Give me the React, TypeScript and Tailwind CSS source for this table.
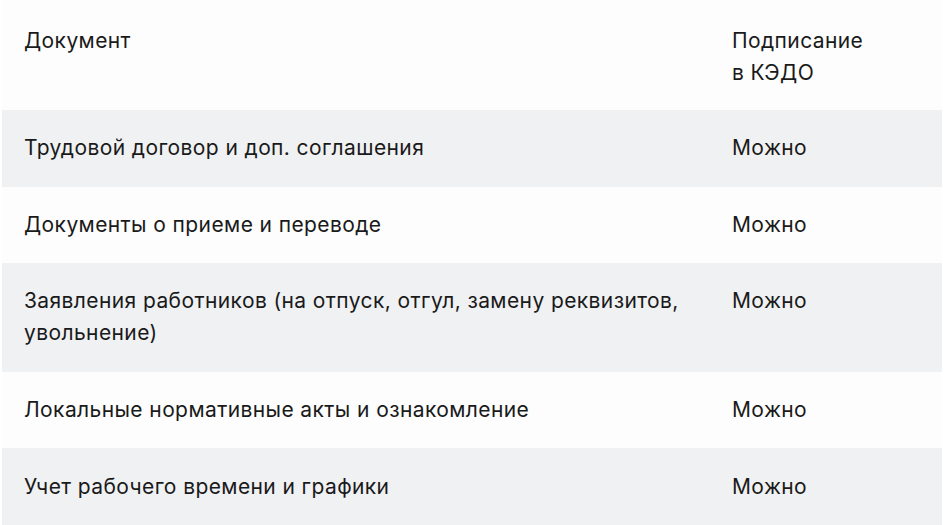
import React from "react";

const rows: { doc: string; val: string; gray: boolean }[] = [
  { doc: "Трудовой договор и доп. соглашения", val: "Можно", gray: true },
  { doc: "Документы о приеме и переводе", val: "Можно", gray: false },
  {
    doc: "Заявления работников (на отпуск, отгул, замену реквизитов, увольнение)",
    val: "Можно",
    gray: true,
  },
  { doc: "Локальные нормативные акты и ознакомление", val: "Можно", gray: false },
  { doc: "Учет рабочего времени и графики", val: "Можно", gray: true },
];

export default function App() {
  return (
    <div
      className="w-[944px] h-[525px] bg-white overflow-hidden px-[2px] text-[21px] leading-[32px] tracking-[0.4px] text-[#1a1a1a]"
      style={{ fontFamily: "Inter, 'Noto Sans', sans-serif" }}
    >
      <div className="grid grid-cols-[730px_1fr] pt-[25px] pb-[21px] bg-[#fdfdfd]">
        <div className="pl-[22px]">Документ</div>
        <div>
          Подписание
          <br />в КЭДО
        </div>
      </div>
      {rows.map((r, i) => (
        <div
          key={i}
          className={
            "grid grid-cols-[730px_1fr] py-[22.3px] " +
            (r.gray ? "bg-[#f0f1f3]" : "bg-[#fdfdfd]")
          }
        >
          <div className="pl-[22px] pr-[40px]">{r.doc}</div>
          <div>{r.val}</div>
        </div>
      ))}
    </div>
  );
}
